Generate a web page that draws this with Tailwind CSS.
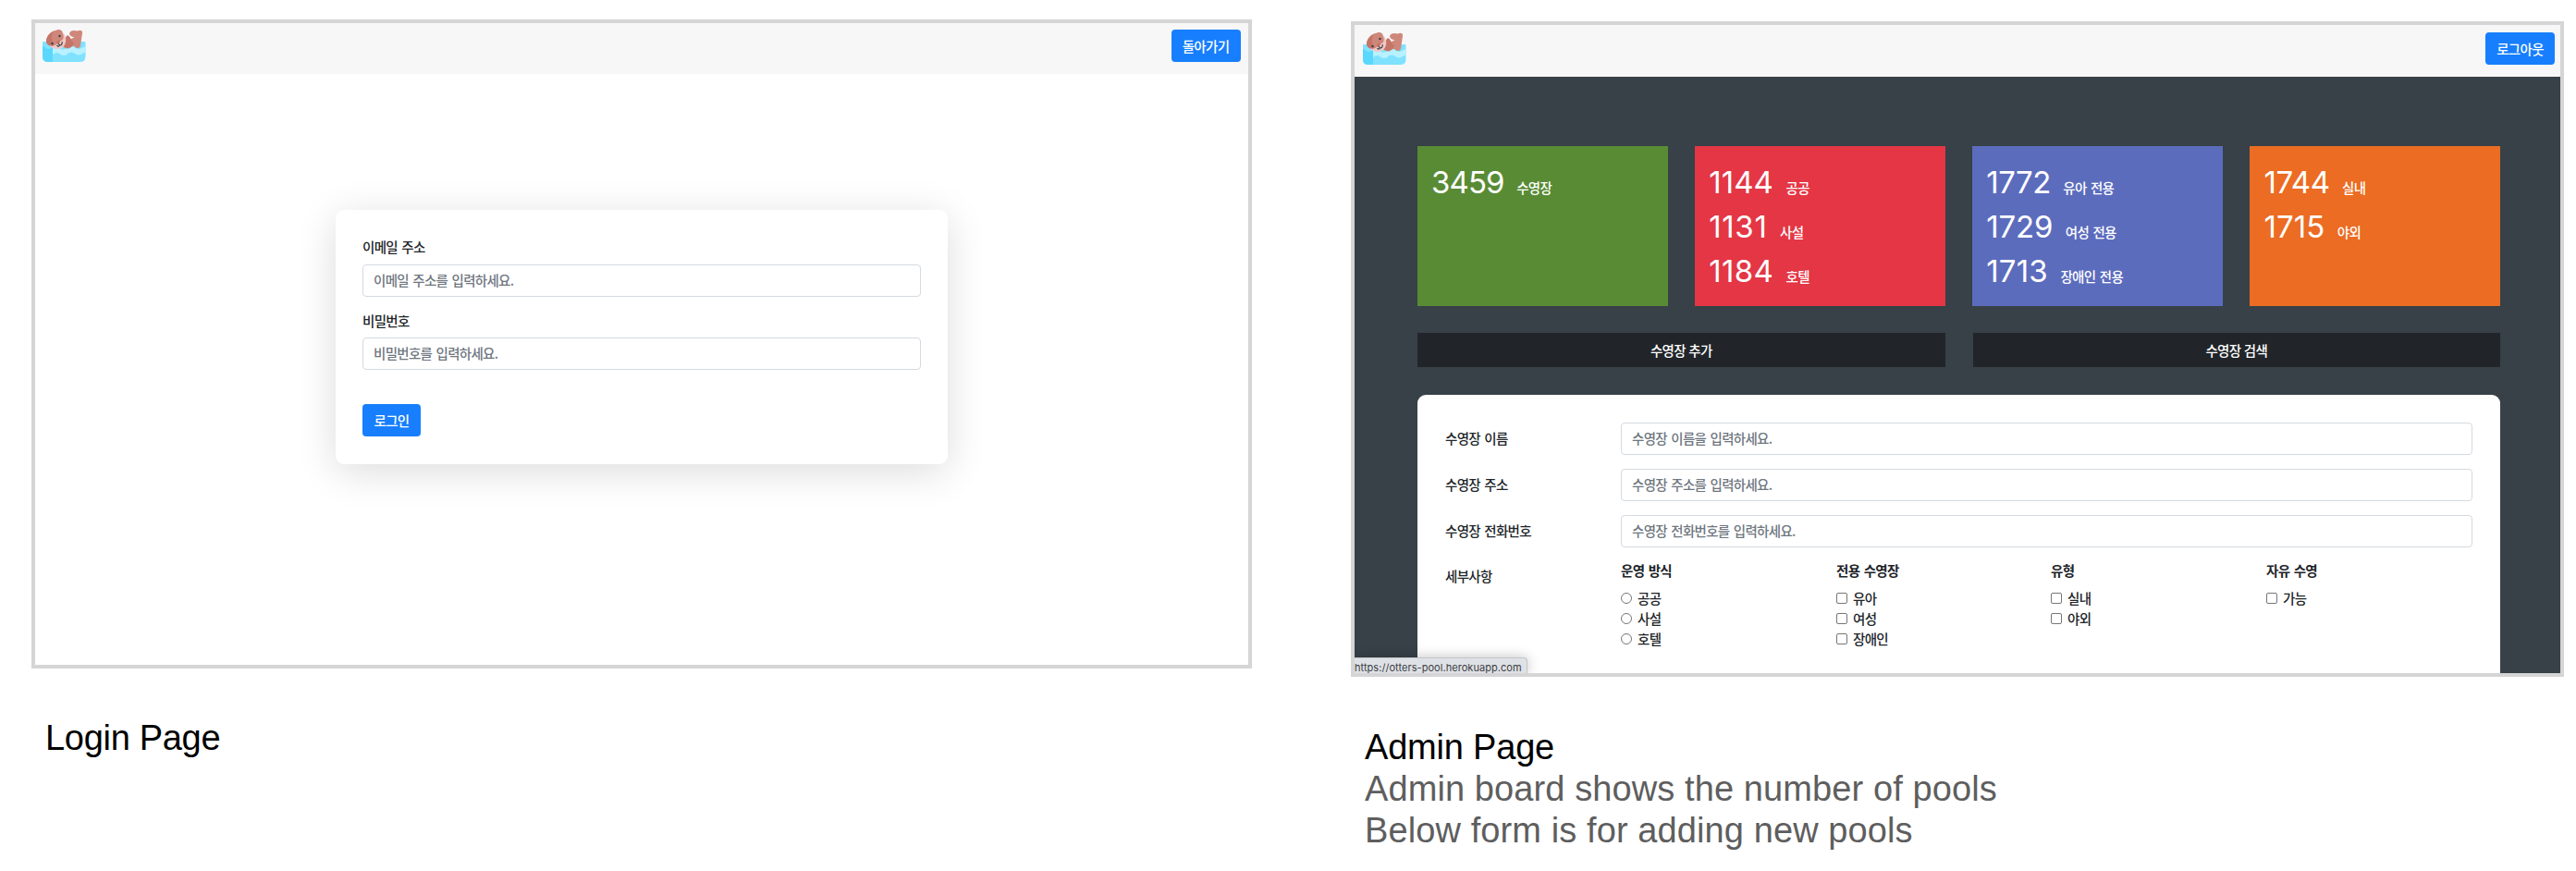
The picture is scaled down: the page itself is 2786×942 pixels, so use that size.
<!DOCTYPE html>
<html lang="ko">
<head>
<meta charset="utf-8">
<title>Otters Pool</title>
<script src="https://cdn.jsdelivr.net/npm/@tailwindcss/browser@4"></script>
</head>
<body class="h-[942px] w-[2786px] overflow-hidden bg-white font-['Noto_Sans_CJK_KR',sans-serif] text-[14.5px] font-medium leading-[22px] tracking-[-0.7px] text-[#212529] [word-spacing:1px]">
<svg class="hidden">
  <symbol id="otter" viewBox="0 0 47 35">
    <path d="M0 14Q0 13 1 13H45.500Q46.500 13 46.500 14V29Q46.500 35 40.500 35H6Q0 35 0 29Z" fill="#80e2ff"/>
    <path d="M0 18C3 18 3 21 6 21C8 21 9 20 11 19V35H6Q0 35 0 29Z" fill="#5ad7fd"/>
    <path d="M11 19.500Q13 18 16 18.500C19 19 19 21.500 22 21.500C27 21.500 27 18 31.500 18C35 18 36 21 39 21C42 21 43 18.500 46.500 18.500V25C43 25 42 27.500 39 27.500C35 27.500 35 24.500 31 24.500C27 24.500 27 28 23 28C19 28 19 25 15.500 25Q13 25 11 27Z" fill="#b8f1ff"/>
    <path d="M22 13L26.500 6.500Q29 6 30.500 10L34.500 8.500Q29 7 29 4Q30 1 34 1L38 1.500Q40.500 0 42.500 1.500Q43.500 2.500 43 4L41 17.500Q40.500 20 38 20Q35 20 34.500 18C31 17.500 30.500 20.500 27 20.500Q23.500 20 22 18Z" fill="#cf877b"/>
    <path d="M23 12L26.500 6.500Q29 6 30 10L34 15L31 18.500Q28 21 23.500 19Z" fill="#c57468"/>
    <path d="M7 17C12 22 20 22.500 23.500 17C26.500 12 25.500 7 22 3Z" fill="#f0c8c6"/>
    <path d="M4 11.500C5 5 11 1 15 0.800Q17-0.800 19.500 0.500Q22 1.500 21.500 3.500C24 8 22.500 12 19 12.500L15.500 15.500Q12 19 7 17Q3.500 15 4 11.500Z" fill="#cf877b"/>
    <path d="M4 11.500C5 7 8 3.500 11.500 2.200C8.500 8 10 13 13 16.500Q10 18 7 17Q3.500 15 4 11.500Z" fill="#c57468"/>
    <ellipse cx="17" cy="13.500" rx="2.300" ry="1.600" transform="rotate(-40 17 13.500)" fill="#c57468"/>
    <circle cx="10.500" cy="15" r="1.200" fill="#3b4145"/><circle cx="18.500" cy="7" r="1.200" fill="#3b4145"/>
    <path d="M15.800 17.500Q17.500 19 18.600 16.800Q21.300 17 21.200 13.500M18.600 16.800L17.300 15.300" stroke="#3b4145" stroke-width="1.200" stroke-linecap="round" fill="none"/>
  </symbol>
</svg>
<main class="flex items-start">
  <section class="ml-[34px] mt-[21px] w-[1320px]">
    <div class="h-[702px] border-4 border-[#d5d5d5] bg-white">
      <nav class="flex h-[55px] items-start justify-between bg-[#f7f7f7] pl-2 pr-[8.5px] pt-[7px]">
        <svg class="h-[35px] w-[47px]"><use href="#otter"/></svg>
        <button class="flex h-[35px] w-[75px] items-center justify-center rounded-[4px] bg-[#177ffd] text-white">돌아가기</button>
      </nav>
      <form class="mx-auto mt-[147px] h-[275px] w-[662px] rounded-[9px] bg-white px-[29px] pt-[29px] shadow-[0_8px_44px_rgba(0,0,0,0.14)]">
        <div class="h-[22px]">이메일 주소</div>
        <div class="mt-2 flex h-[35px] items-center rounded-[4px] border border-[#d4dae0] px-[11px] pb-px text-[#6f777f]">이메일 주소를 입력하세요.</div>
        <div class="mt-[15px] h-[22px]">비밀번호</div>
        <div class="mt-[7px] flex h-[35px] items-center rounded-[4px] border border-[#d4dae0] px-[11px] pb-px text-[#6f777f]">비밀번호를 입력하세요.</div>
        <button type="button" class="mt-[37px] flex h-[35px] w-[63px] items-center justify-center rounded-[4px] bg-[#177ffd] text-white">로그인</button>
      </form>
    </div>
    <h2 class="mt-[53px] pl-[15px] font-['Liberation_Sans',sans-serif] text-[38px] font-normal leading-[45px] tracking-[-0.3px] text-black [word-spacing:0]">Login Page</h2>
  </section>

  <section class="ml-[107px] mt-[23px] w-[1312px]">
    <div class="relative h-[709px] overflow-hidden border-4 border-[#d5d5d5] bg-[#374147]">
      <nav class="flex h-[56px] items-start justify-between bg-[#f7f7f7] pl-[9px] pr-[6px] pt-2">
        <svg class="h-[35px] w-[47px]"><use href="#otter"/></svg>
        <button class="flex h-[35px] w-[75px] items-center justify-center rounded-[4px] bg-[#177ffd] text-white">로그아웃</button>
      </nav>
      <div class="ml-[68px] mt-[75px] w-[1171px]">
        <div class="grid grid-cols-4 gap-x-[29.500px] text-white">
          <div class="h-[173px] bg-[#598b35] pl-[15px] pt-[15px]">
            <p class="flex h-12 items-baseline gap-[13.5px]"><span class="font-[Inter,sans-serif] text-[33px] font-normal leading-[48px] tracking-[-0.9px]">3459</span><span>수영장</span></p>
          </div>
          <div class="h-[173px] bg-[#e43644] pl-[15px] pt-[15px]">
            <p class="flex h-12 items-baseline gap-[13.5px]"><span class="font-[Inter,sans-serif] text-[33px] font-normal leading-[48px] tracking-[0.1px]">1144</span><span>공공</span></p>
            <p class="flex h-12 items-baseline gap-[13.5px]"><span class="font-[Inter,sans-serif] text-[33px] font-normal leading-[48px] tracking-[0.7px]">1131</span><span>사설</span></p>
            <p class="flex h-12 items-baseline gap-[13.5px]"><span class="font-[Inter,sans-serif] text-[33px] font-normal leading-[48px] tracking-[0.35px]">1184</span><span>호텔</span></p>
          </div>
          <div class="h-[173px] bg-[#5c6cbd] pl-[15px] pt-[15px]">
            <p class="flex h-12 items-baseline gap-[13.5px]"><span class="font-[Inter,sans-serif] text-[33px] font-normal leading-[48px] tracking-[-0.5px]">1772</span><span>유아 전용</span></p>
            <p class="flex h-12 items-baseline gap-[13.5px]"><span class="font-[Inter,sans-serif] text-[33px] font-normal leading-[48px] tracking-[-0.15px]">1729</span><span>여성 전용</span></p>
            <p class="flex h-12 items-baseline gap-[13.5px]"><span class="font-[Inter,sans-serif] text-[33px] font-normal leading-[48px] tracking-[0.2px]">1713</span><span>장애인 전용</span></p>
          </div>
          <div class="h-[173px] bg-[#eb6c22] pl-[15px] pt-[15px]">
            <p class="flex h-12 items-baseline gap-[13.5px]"><span class="font-[Inter,sans-serif] text-[33px] font-normal leading-[48px] tracking-[-0.4px]">1744</span><span>실내</span></p>
            <p class="flex h-12 items-baseline gap-[13.5px]"><span class="font-[Inter,sans-serif] text-[33px] font-normal leading-[48px] tracking-[0.1px]">1715</span><span>야외</span></p>
          </div>
        </div>
        <div class="mt-[29px] grid grid-cols-2 gap-[30px] text-white">
          <button class="h-[37px] bg-[#212529]">수영장 추가</button>
          <button class="h-[37px] bg-[#212529]">수영장 검색</button>
        </div>
        <form class="mt-[30px] h-[320px] rounded-t-[9px] bg-white pl-[30px] pr-[30px] pt-[30px]">
          <div class="mb-[15px] flex h-[35px] items-center"><span class="w-[190px] pb-px">수영장 이름</span><div class="flex h-[35px] flex-1 items-center rounded-[4px] border border-[#d4dae0] px-[11px] pb-px text-[#6f777f]">수영장 이름을 입력하세요.</div></div>
          <div class="mb-[15px] flex h-[35px] items-center"><span class="w-[190px] pb-px">수영장 주소</span><div class="flex h-[35px] flex-1 items-center rounded-[4px] border border-[#d4dae0] px-[11px] pb-px text-[#6f777f]">수영장 주소를 입력하세요.</div></div>
          <div class="mb-[14px] flex h-[35px] items-center"><span class="w-[190px] pb-px">수영장 전화번호</span><div class="flex h-[35px] flex-1 items-center rounded-[4px] border border-[#d4dae0] px-[11px] pb-px text-[#6f777f]">수영장 전화번호를 입력하세요.</div></div>
          <div class="flex">
            <span class="w-[190px] pt-[6px]">세부사항</span>
            <div class="grid grid-cols-[233px_232px_233px_200px]">
              <div>
                <b class="mb-2 block">운영 방식</b>
                <p class="flex items-center gap-[6px]"><i class="size-3 rounded-full border border-[#767676]"></i>공공</p>
                <p class="flex items-center gap-[6px]"><i class="size-3 rounded-full border border-[#767676]"></i>사설</p>
                <p class="flex items-center gap-[6px]"><i class="size-3 rounded-full border border-[#767676]"></i>호텔</p>
              </div>
              <div>
                <b class="mb-2 block">전용 수영장</b>
                <p class="flex items-center gap-[6px]"><i class="size-3 rounded-[2px] border border-[#767676]"></i>유아</p>
                <p class="flex items-center gap-[6px]"><i class="size-3 rounded-[2px] border border-[#767676]"></i>여성</p>
                <p class="flex items-center gap-[6px]"><i class="size-3 rounded-[2px] border border-[#767676]"></i>장애인</p>
              </div>
              <div>
                <b class="mb-2 block">유형</b>
                <p class="flex items-center gap-[6px]"><i class="size-3 rounded-[2px] border border-[#767676]"></i>실내</p>
                <p class="flex items-center gap-[6px]"><i class="size-3 rounded-[2px] border border-[#767676]"></i>야외</p>
              </div>
              <div>
                <b class="mb-2 block">자유 수영</b>
                <p class="flex items-center gap-[6px]"><i class="size-3 rounded-[2px] border border-[#767676]"></i>가능</p>
              </div>
            </div>
          </div>
        </form>
      </div>
      <div class="absolute bottom-0 left-0 flex h-[17px] w-[187px] items-center whitespace-nowrap rounded-tr-[4px] border-r border-t border-[#c3c6ca] bg-[#dee1e6] pt-[3px] font-[Inter,sans-serif] text-[11px] font-normal leading-[14px] tracking-[0.05px] text-[#3c4043] shadow-[0_0_14px_rgba(0,0,0,0.25)] [word-spacing:0]">https://otters-pool.herokuapp.com</div>
    </div>
    <div class="mt-[54px] pl-[15px] font-['Liberation_Sans',sans-serif] text-[38px] font-normal leading-[45px] text-[#5e5e5e] [word-spacing:0]">
      <h2 class="tracking-[-0.2px] text-black">Admin Page</h2>
      <p class="tracking-[0.1px]">Admin board shows the number of pools</p>
      <p class="tracking-[0.1px]">Below form is for adding new pools</p>
    </div>
  </section>
</main>
</body>
</html>
